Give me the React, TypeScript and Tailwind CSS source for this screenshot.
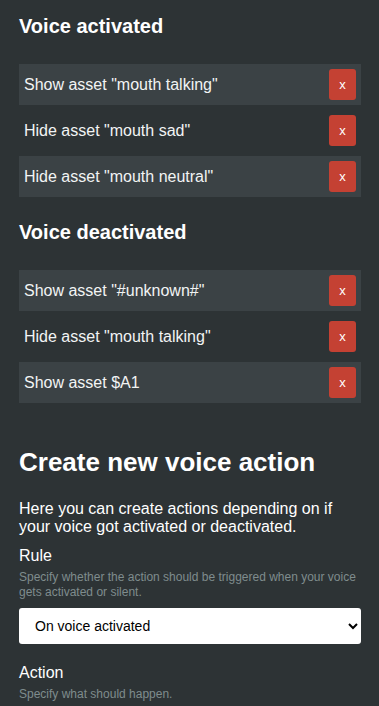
import React from "react";

const font = { fontFamily: '"Liberation Sans", Arial, sans-serif' };

function Row({ text, shaded }: { text: string; shaded: boolean }) {
  return (
    <div
      className={`flex h-[41px] items-center justify-between pl-[5px] pr-[5px] ${shaded ? "bg-[#3b4245]" : ""}`}
    >
      <span className="text-[16px] leading-[18px] text-[#f2f4f4]">{text}</span>
      <button className="flex h-[31px] w-[27px] items-center justify-center rounded-[3px] bg-[#c44133] text-[13px] leading-none text-white">
        x
      </button>
    </div>
  );
}

export default function App() {
  const activated = [
    'Show asset "mouth talking"',
    'Hide asset "mouth sad"',
    'Hide asset "mouth neutral"',
  ];
  const deactivated = [
    'Show asset "#unknown#"',
    'Hide asset "mouth talking"',
    "Show asset $A1",
  ];
  return (
    <div className="min-h-[706px] w-[379px] bg-[#2d3335] pl-[19px] pr-[18px] pt-[15px] text-white" style={font}>
      <h2 className="text-[20px] font-bold leading-[23px]">Voice activated</h2>
      <div className="mt-[26px] flex flex-col gap-[5px]">
        {activated.map((t, i) => (
          <Row key={t} text={t} shaded={i % 2 === 0} />
        ))}
      </div>
      <h2 className="mt-[24px] text-[20px] font-bold leading-[23px]">Voice deactivated</h2>
      <div className="mt-[26px] flex flex-col gap-[5px]">
        {deactivated.map((t, i) => (
          <Row key={t} text={t} shaded={i % 2 === 0} />
        ))}
      </div>
      <h1 className="mt-[44px] text-[26px] font-bold leading-[31px]">Create new voice action</h1>
      <p className="mt-[22px] text-[16px] leading-[18px] text-white">
        Here you can create actions depending on if your voice got activated or deactivated.
      </p>
      <div className="mt-[11px] text-[16px] leading-[18px]">Rule</div>
      <div className="mt-[5px] text-[12px] leading-[15px] text-[#7f8c8d]">
        Specify whether the action should be triggered when your voice gets activated or silent.
      </div>
      <select
        className="mt-[8px] box-border block h-[36px] w-full rounded-[3px] bg-white pl-3 pr-0.5 text-[14px] text-black"
        style={font}
        defaultValue="on"
      >
        <option value="on">On voice activated</option>
        <option value="off">On voice deactivated</option>
      </select>
      <div className="mt-[20px] text-[16px] leading-[18px]">Action</div>
      <div className="mt-[5px] text-[12px] leading-[15px] text-[#7f8c8d]">Specify what should happen.</div>
    </div>
  );
}
